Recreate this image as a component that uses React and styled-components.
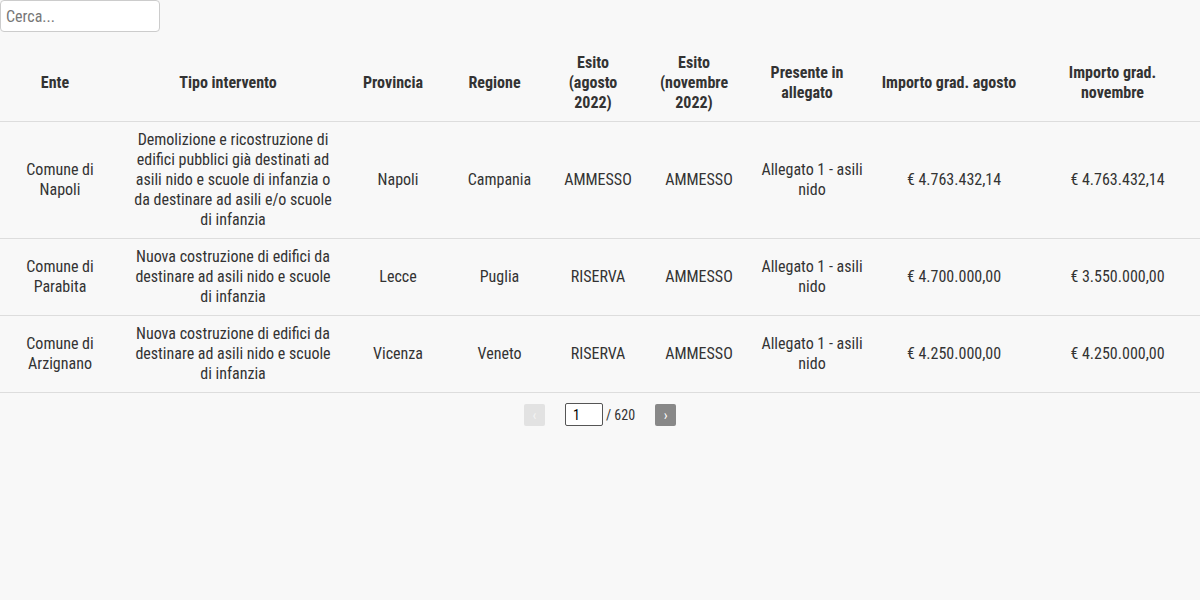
import React, { useState } from "react";
import styled, { createGlobalStyle } from "styled-components";

const GlobalStyle = createGlobalStyle`
  body {
    margin: 0;
    background: #f8f8f8;
    font-family: "Roboto Condensed", "Roboto", "Liberation Sans", sans-serif;
    font-stretch: condensed;
    color: #333;
  }
`;

const Page = styled.div`
  width: 1200px;
  display: flex;
  flex-direction: column;
`;

const Search = styled.input`
  width: 160px;
  height: 32px;
  box-sizing: border-box;
  border: 1px solid #ccc;
  border-radius: 4px;
  padding: 0 5px;
  font: inherit;
  font-size: 16px;
  background: #fff;
  color: #333;
  &::placeholder {
    color: #777;
  }
`;

const Table = styled.table`
  width: 100%;
  margin-top: 8px;
  border-collapse: collapse;
  table-layout: fixed;
  font-size: 16px;
  line-height: 20px;
`;

const Th = styled.th`
  font-weight: 700;
  text-align: center;
  vertical-align: middle;
  padding: 13px 13px 8px 3px;
  border-bottom: 1px solid #ddd;
`;

const Td = styled.td`
  text-align: center;
  vertical-align: middle;
  padding: 8px;
  border-bottom: 1px solid #ddd;
`;

const Pager = styled.div`
  display: flex;
  align-items: center;
  justify-content: center;
  gap: 20px;
  padding-top: 10px;
  font-size: 14px;
`;

const PageButton = styled.button`
  width: 21px;
  height: 22px;
  border: none;
  border-radius: 2px;
  padding: 0;
  font: inherit;
  font-size: 14px;
  line-height: 22px;
  background: ${(p) => (p.disabled ? "#e2e2e2" : "#888")};
  color: ${(p) => (p.disabled ? "#f4f4f4" : "#fff")};
`;

const PageInfo = styled.div`
  display: flex;
  align-items: center;
  gap: 3px;
`;

const PageInput = styled.input`
  width: 38px;
  height: 23px;
  box-sizing: border-box;
  border: 1px solid #555;
  border-radius: 2px;
  padding: 0 7px;
  font: inherit;
  font-size: 14px;
  background: #fff;
`;

const columns = [
  { label: "Ente", width: 120 },
  { label: "Tipo intervento", width: 226 },
  { label: "Provincia", width: 104 },
  { label: "Regione", width: 99 },
  { label: "Esito (agosto 2022)", width: 98 },
  { label: "Esito (novembre 2022)", width: 104 },
  { label: "Presente in allegato", width: 122 },
  { label: "Importo grad. agosto", width: 162 },
  { label: "Importo grad. novembre", width: 165 },
];

const rows = [
  [
    "Comune di Napoli",
    "Demolizione e ricostruzione di edifici pubblici già destinati ad asili nido e scuole di infanzia o da destinare ad asili e/o scuole di infanzia",
    "Napoli",
    "Campania",
    "AMMESSO",
    "AMMESSO",
    "Allegato 1 - asili nido",
    "€ 4.763.432,14",
    "€ 4.763.432,14",
  ],
  [
    "Comune di Parabita",
    "Nuova costruzione di edifici da destinare ad asili nido e scuole di infanzia",
    "Lecce",
    "Puglia",
    "RISERVA",
    "AMMESSO",
    "Allegato 1 - asili nido",
    "€ 4.700.000,00",
    "€ 3.550.000,00",
  ],
  [
    "Comune di Arzignano",
    "Nuova costruzione di edifici da destinare ad asili nido e scuole di infanzia",
    "Vicenza",
    "Veneto",
    "RISERVA",
    "AMMESSO",
    "Allegato 1 - asili nido",
    "€ 4.250.000,00",
    "€ 4.250.000,00",
  ],
];

const App = () => {
  const [page, setPage] = useState("1");

  return (
    <Page>
      <GlobalStyle />
      <Search placeholder="Cerca..." />
      <Table>
        <colgroup>
          {columns.map((c) => (
            <col key={c.label} style={{ width: c.width }} />
          ))}
        </colgroup>
        <thead>
          <tr>
            {columns.map((c) => (
              <Th key={c.label}>{c.label}</Th>
            ))}
          </tr>
        </thead>
        <tbody>
          {rows.map((r, i) => (
            <tr key={i}>
              {r.map((cell, j) => (
                <Td key={j}>{cell}</Td>
              ))}
            </tr>
          ))}
        </tbody>
      </Table>
      <Pager>
        <PageButton disabled>‹</PageButton>
        <PageInfo>
          <PageInput value={page} onChange={(e) => setPage(e.target.value)} />
          <span>/ 620</span>
        </PageInfo>
        <PageButton>›</PageButton>
      </Pager>
    </Page>
  );
};

export default App;
